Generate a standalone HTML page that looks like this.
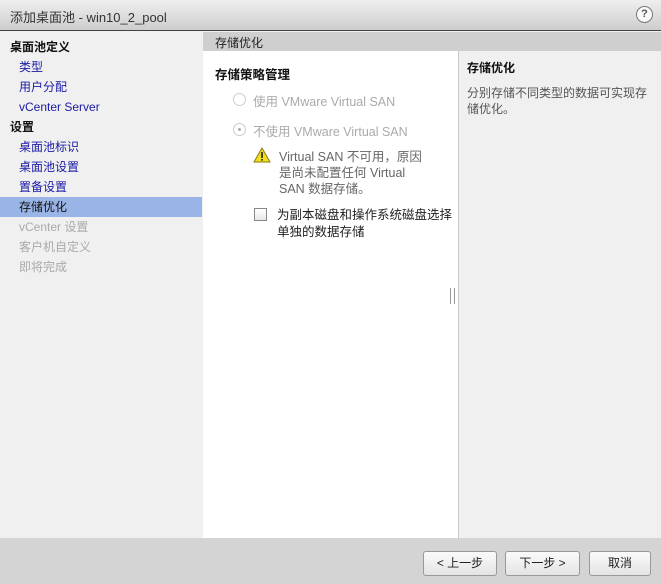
<!DOCTYPE html>
<html><head><meta charset="utf-8"><style>
*{margin:0;padding:0;box-sizing:border-box}
body{width:661px;height:584px;position:relative;overflow:hidden;font-family:"Liberation Sans","Noto Sans CJK SC",sans-serif;font-size:12px;background:#f0f0f0;color:#333}
.abs{position:absolute}
#title{left:0;top:0;width:661px;height:31px;background:linear-gradient(#efefef,#cdcdcd);border-bottom:1px solid #444;font-size:13px;color:#333;padding:7px 0 0 10px}
#help{right:8px;top:6px;width:17px;height:17px;border-radius:50%;border:1px solid #777;background:#f8f8f8;font-size:11px;font-weight:bold;text-align:center;line-height:15px;color:#555}
#nav{left:0;top:32px;width:202px;height:506px;background:#f0f0f0}
.n{position:absolute;left:0;width:202px;height:20px;line-height:20px;font-size:12px}
.h{padding-left:10px;font-weight:bold;color:#111}
.l{padding-left:19px;color:#1a1aa6}
.d{padding-left:19px;color:#aaa}
.sel{background:#99b4e6;color:#111}
#hdr{left:203px;top:32px;width:458px;height:19px;background:#cfcfcf;padding:2px 0 0 12px;color:#222}
#mid{left:203px;top:51px;width:255px;height:487px;background:#fff}
#right{left:458px;top:51px;width:203px;height:487px;background:#f0f0f0;border-left:1px solid #c8c8c8}
#foot{left:0;top:538px;width:661px;height:46px;background:#d4d4d4}
.btn{position:absolute;top:551px;height:25px;border:1px solid #999;border-radius:3px;background:linear-gradient(#fafafa,#e4e4e4);text-align:center;line-height:23px;color:#222}
</style></head><body>
<div id="title" class="abs">添加桌面池 - win10_2_pool</div>
<div id="help" class="abs">?</div>
<div id="nav" class="abs">
<div class="n h" style="top:5px">桌面池定义</div>
<div class="n l" style="top:25px">类型</div>
<div class="n l" style="top:45px">用户分配</div>
<div class="n l" style="top:65px">vCenter Server</div>
<div class="n h" style="top:85px">设置</div>
<div class="n l" style="top:105px">桌面池标识</div>
<div class="n l" style="top:125px">桌面池设置</div>
<div class="n l" style="top:145px">置备设置</div>
<div class="n l sel" style="top:165px">存储优化</div>
<div class="n d" style="top:185px">vCenter 设置</div>
<div class="n d" style="top:205px">客户机自定义</div>
<div class="n d" style="top:225px">即将完成</div>
</div>
<div id="hdr" class="abs">存储优化</div>
<div id="mid" class="abs">
<div class="abs" style="left:12px;top:13px;font-weight:bold;color:#111;font-size:12.5px">存储策略管理</div>
<div class="abs" style="left:30px;top:42px;width:13px;height:13px;border:1px solid #ccc;border-radius:50%"></div>
<div class="abs" style="left:50px;top:40px;color:#aaa;font-size:12.5px">使用 VMware Virtual SAN</div>
<div class="abs" style="left:30px;top:72px;width:13px;height:13px;border:1px solid #ccc;border-radius:50%"><div style="width:3px;height:3px;background:#aaa;border-radius:50%;margin:4px"></div></div>
<div class="abs" style="left:50px;top:70px;color:#aaa;font-size:12.5px">不使用 VMware Virtual SAN</div>
<svg class="abs" style="left:50px;top:96px" width="18" height="16" viewBox="0 0 18 16"><path d="M9 1L17 15H1Z" fill="#f3e01a" stroke="#8a7a10" stroke-width="1"/><rect x="8.2" y="5" width="1.6" height="6" fill="#222"/><rect x="8.2" y="12" width="1.6" height="1.6" fill="#222"/></svg>
<div class="abs" style="left:76px;top:98px;width:170px;line-height:16px;color:#666;font-size:12.5px;white-space:nowrap">Virtual SAN 不可用，原因<br>是尚未配置任何 Virtual<br>SAN 数据存储。</div>
<div class="abs" style="left:51px;top:157px;width:13px;height:13px;border:1px solid #888;background:linear-gradient(#fff,#e8e8e8)"></div>
<div class="abs" style="left:74px;top:156px;width:180px;line-height:17px;color:#222;font-size:12.5px;white-space:nowrap">为副本磁盘和操作系统磁盘选择<br>单独的数据存储</div>
</div>
<div class="abs" style="left:450px;top:288px;width:5px;height:16px;border-left:1px solid #999;border-right:1px solid #999"></div>
<div id="right" class="abs">
<div class="abs" style="left:8px;top:8px;font-weight:bold;color:#111">存储优化</div>
<div class="abs" style="left:8px;top:34px;width:190px;line-height:16px;color:#555;white-space:nowrap">分别存储不同类型的数据可实现存<br>储优化。</div>
</div>
<div id="foot" class="abs"></div>
<div class="btn" style="left:423px;width:74px">&lt; 上一步</div>
<div class="btn" style="left:505px;width:75px">下一步 &gt;</div>
<div class="btn" style="left:589px;width:62px">取消</div>
</body></html>
